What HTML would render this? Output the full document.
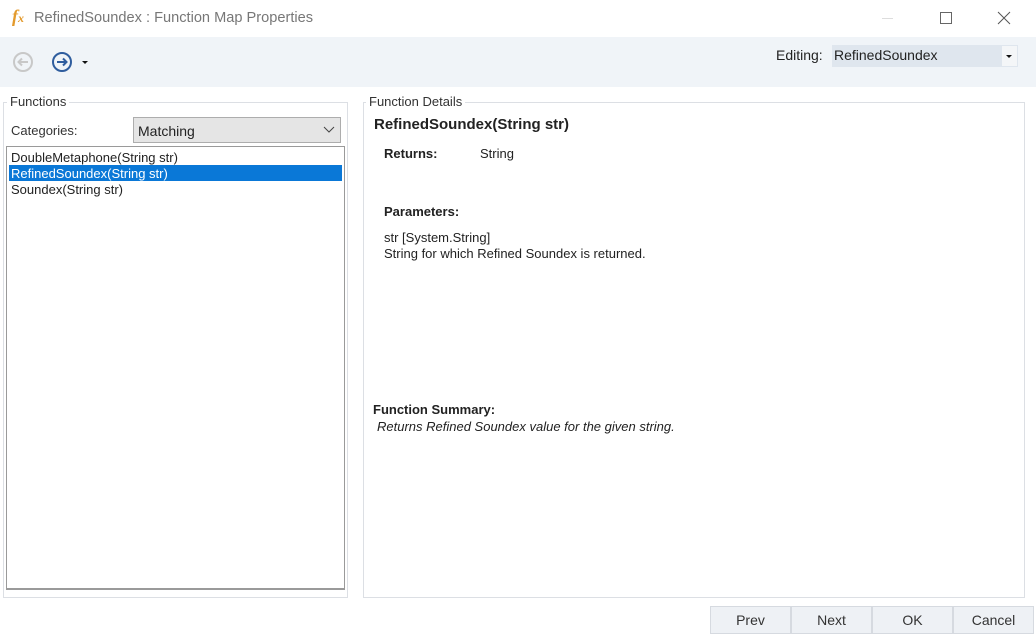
<!DOCTYPE html>
<html><head><style>
*{margin:0;padding:0;box-sizing:border-box}
body{width:1036px;height:634px;background:#fff;font-family:"Liberation Sans",sans-serif;font-size:13px;color:#222;position:relative;overflow:hidden}
.a{position:absolute}
.gb{position:absolute;border:1px solid #dcdfe4}
.lg{position:absolute;background:#fff;padding:0 3px;font-size:13px;color:#333}
.btn{position:absolute;top:606px;height:28px;background:#eef1f5;border:1px solid #d6dae0;text-align:center;line-height:27px;font-size:14px;color:#333}
</style></head><body>
<div class="a" style="left:12px;top:6px;font:italic bold 18px 'Liberation Serif',serif;color:#e39a2c">f<span style="font-size:12px">x</span></div>
<div class="a" style="left:34px;top:10px;font-size:14.6px;color:#777">RefinedSoundex : Function Map Properties</div>
<div class="a" style="left:882px;top:18px;width:11px;height:1px;background:#ddd"></div>
<div class="a" style="left:940px;top:12px;width:12px;height:12px;border:1px solid #666"></div>
<svg class="a" style="left:997px;top:11px" width="14" height="14"><path d="M1 1L13 13M13 1L1 13" stroke="#555" stroke-width="1"/></svg>
<div class="a" style="left:0;top:37px;width:1036px;height:50px;background:#f0f4f8"></div>
<svg class="a" style="left:12px;top:51px" width="22" height="22"><circle cx="11" cy="11" r="9" fill="none" stroke="#c8c8c8" stroke-width="2"/><path d="M16 11H7M10 7.5L6.5 11L10 14.5" fill="none" stroke="#c8c8c8" stroke-width="2"/></svg>
<svg class="a" style="left:51px;top:51px" width="22" height="22"><circle cx="11" cy="11" r="9" fill="none" stroke="#2f5d9e" stroke-width="2"/><path d="M6 11H15M12 7.5L15.5 11L12 14.5" fill="none" stroke="#2f5d9e" stroke-width="2"/></svg>
<div class="a" style="left:82px;top:61px;border-left:3px solid transparent;border-right:3px solid transparent;border-top:3px solid #111"></div>
<div class="a" style="left:776px;top:47px;font-size:14px;color:#222">Editing:</div>
<div class="a" style="left:832px;top:45px;width:186px;height:22px;background:#dfe6ee"></div>
<div class="a" style="left:834px;top:47px;font-size:14px;color:#222">RefinedSoundex</div>
<div class="a" style="left:1002px;top:46px;width:15px;height:20px;background:#f4f6f8"></div>
<div class="a" style="left:1006px;top:55px;border-left:3px solid transparent;border-right:3px solid transparent;border-top:3px solid #111"></div>

<div class="gb" style="left:3px;top:102px;width:345px;height:496px"></div>
<div class="lg" style="left:7px;top:94px">Functions</div>
<div class="a" style="left:11px;top:123px;font-size:13px;color:#333">Categories:</div>
<div class="a" style="left:133px;top:117px;width:208px;height:26px;background:#e5e5e5;border:1px solid #adadad"></div>
<div class="a" style="left:138px;top:123px;font-size:14px;color:#222">Matching</div>
<svg class="a" style="left:323px;top:126px" width="12" height="8"><path d="M1 1L6 6L11 1" fill="none" stroke="#444"/></svg>
<div class="a" style="left:6px;top:146px;width:339px;height:444px;border:1px solid #9a9a9a;border-bottom:2px solid #9a9a9a"></div>
<div class="a" style="left:11px;top:150px">DoubleMetaphone(String str)</div>
<div class="a" style="left:9px;top:165px;width:333px;height:16px;background:#0a78d7"></div>
<div class="a" style="left:11px;top:166px;color:#fff">RefinedSoundex(String str)</div>
<div class="a" style="left:11px;top:182px">Soundex(String str)</div>

<div class="gb" style="left:363px;top:102px;width:662px;height:496px"></div>
<div class="lg" style="left:366px;top:94px">Function Details</div>
<div class="a" style="left:374px;top:116px;font-size:15px;font-weight:bold;color:#222">RefinedSoundex(String str)</div>
<div class="a" style="left:384px;top:146px;font-weight:bold;color:#222">Returns:</div>
<div class="a" style="left:480px;top:146px">String</div>
<div class="a" style="left:384px;top:204px;font-weight:bold;color:#222">Parameters:</div>
<div class="a" style="left:384px;top:230px">str [System.String]</div>
<div class="a" style="left:384px;top:246px">String for which Refined Soundex is returned.</div>
<div class="a" style="left:373px;top:402px;font-weight:bold;color:#222">Function Summary:</div>
<div class="a" style="left:377px;top:419px;font-style:italic">Returns Refined Soundex value for the given string.</div>

<div class="btn" style="left:710px;width:81px">Prev</div>
<div class="btn" style="left:791px;width:81px">Next</div>
<div class="btn" style="left:872px;width:81px">OK</div>
<div class="btn" style="left:953px;width:81px">Cancel</div>
</body></html>
